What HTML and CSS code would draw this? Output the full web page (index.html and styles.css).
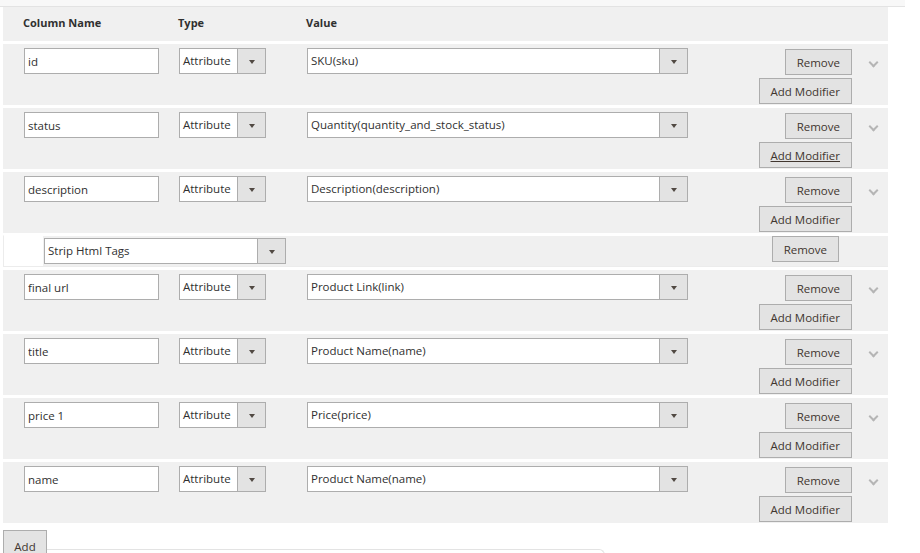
FILE: index.html
```html
<!DOCTYPE html>
<html lang="en">
<head>
<meta charset="UTF-8">
<meta name="viewport" content="width=device-width, initial-scale=1.0">
<title>Feed Columns</title>
<link rel="stylesheet" href="styles.css">
</head>
<body>
<div class="top-band"></div>
<div class="columns">
  <div class="head-row">
    <div>Column Name</div>
    <div>Type</div>
    <div>Value</div>
  </div>

  <div class="row">
    <input class="text-input" value="id">
    <div class="select type-select"><span class="select-text">Attribute</span><span class="select-arrow"></span></div>
    <div class="select"><span class="select-text">SKU(sku)</span><span class="select-arrow"></span></div>
    <div></div>
    <div class="actions"><button class="btn">Remove</button><button class="btn">Add Modifier</button></div>
    <div class="toggle"><span class="chevron"></span></div>
  </div>

  <div class="row">
    <input class="text-input" value="status">
    <div class="select type-select"><span class="select-text">Attribute</span><span class="select-arrow"></span></div>
    <div class="select"><span class="select-text">Quantity(quantity_and_stock_status)</span><span class="select-arrow"></span></div>
    <div></div>
    <div class="actions"><button class="btn">Remove</button><button class="btn btn-hover">Add Modifier</button></div>
    <div class="toggle"><span class="chevron"></span></div>
  </div>

  <div class="row">
    <input class="text-input" value="description">
    <div class="select type-select"><span class="select-text">Attribute</span><span class="select-arrow"></span></div>
    <div class="select"><span class="select-text">Description(description)</span><span class="select-arrow"></span></div>
    <div></div>
    <div class="actions"><button class="btn">Remove</button><button class="btn">Add Modifier</button></div>
    <div class="toggle"><span class="chevron"></span></div>
  </div>

  <div class="mod-row">
    <div class="mod-body">
      <div class="select mod-select"><span class="select-text">Strip Html Tags</span><span class="select-arrow"></span></div>
      <button class="btn">Remove</button>
    </div>
  </div>

  <div class="row">
    <input class="text-input" value="final url">
    <div class="select type-select"><span class="select-text">Attribute</span><span class="select-arrow"></span></div>
    <div class="select"><span class="select-text">Product Link(link)</span><span class="select-arrow"></span></div>
    <div></div>
    <div class="actions"><button class="btn">Remove</button><button class="btn">Add Modifier</button></div>
    <div class="toggle"><span class="chevron"></span></div>
  </div>

  <div class="row">
    <input class="text-input" value="title">
    <div class="select type-select"><span class="select-text">Attribute</span><span class="select-arrow"></span></div>
    <div class="select"><span class="select-text">Product Name(name)</span><span class="select-arrow"></span></div>
    <div></div>
    <div class="actions"><button class="btn">Remove</button><button class="btn">Add Modifier</button></div>
    <div class="toggle"><span class="chevron"></span></div>
  </div>

  <div class="row">
    <input class="text-input" value="price 1">
    <div class="select type-select"><span class="select-text">Attribute</span><span class="select-arrow"></span></div>
    <div class="select"><span class="select-text">Price(price)</span><span class="select-arrow"></span></div>
    <div></div>
    <div class="actions"><button class="btn">Remove</button><button class="btn">Add Modifier</button></div>
    <div class="toggle"><span class="chevron"></span></div>
  </div>

  <div class="row">
    <input class="text-input" value="name">
    <div class="select type-select"><span class="select-text">Attribute</span><span class="select-arrow"></span></div>
    <div class="select"><span class="select-text">Product Name(name)</span><span class="select-arrow"></span></div>
    <div></div>
    <div class="actions"><button class="btn">Remove</button><button class="btn">Add Modifier</button></div>
    <div class="toggle"><span class="chevron"></span></div>
  </div>
</div>

<div class="footer">
  <button class="btn btn-add">Add</button>
  <div class="next-box"></div>
</div>
</body>
</html>
```

FILE: styles.css
```css
html, body {
  margin: 0;
  padding: 0;
  background: #fff;
  font-family: "Open Sans", "Noto Sans", sans-serif;
  font-size: 11.5px;
  color: #303030;
  overflow: hidden;
}
.top-band {
  width: 905px;
  height: 6px;
  background: #f8f8f8;
  border-bottom: 1px solid #e3e3e3;
}
.columns {
  margin-left: 3px;
  width: 885px;
}
.head-row,
.row {
  display: grid;
  grid-template-columns: 155px 128px 381px 1fr auto 36px;
  background: #f0f0f0;
  box-sizing: border-box;
}
.head-row {
  height: 34px;
  padding: 0 0 3px 20px;
  align-items: center;
  font-size: 11px;
  font-weight: 700;
  color: #303030;
  margin-bottom: 3px;
}
.row {
  height: 61px;
  padding: 4px 0 1px 21px;
  margin-bottom: 3px;
  align-items: start;
}
.text-input {
  width: 135px;
  height: 26px;
  box-sizing: border-box;
  border: 1px solid #adadad;
  padding: 0 3px;
  margin: 0;
  font: inherit;
  color: #303030;
  background: #fff;
  outline: none;
}
.select {
  display: flex;
  height: 26px;
  box-sizing: border-box;
  border: 1px solid #adadad;
  background: #fff;
}
.type-select {
  width: 87px;
}
.select-text {
  flex: 1;
  padding-left: 3px;
  line-height: 24px;
  white-space: nowrap;
  overflow: hidden;
}
.select-arrow {
  width: 27px;
  background: #e3e3e3;
  border-left: 1px solid #adadad;
  display: flex;
  align-items: center;
  justify-content: center;
}
.select-arrow::after {
  content: "";
  border-top: 4px solid #514943;
  border-left: 3px solid transparent;
  border-right: 3px solid transparent;
  margin-top: 1px;
}
.actions {
  display: flex;
  flex-direction: column;
  align-items: flex-end;
  gap: 3px;
  padding-top: 1px;
}
.btn {
  height: 26px;
  box-sizing: border-box;
  border: 1px solid #adadad;
  background: #e3e3e3;
  color: #41362f;
  font-family: inherit;
  font-size: 11.5px;
  font-weight: 400;
  padding: 0 11px;
  margin: 0;
  cursor: pointer;
}
.btn-hover {
  text-decoration: underline;
}
.toggle {
  display: flex;
  justify-content: center;
  padding-top: 11px;
}
.chevron {
  width: 5px;
  height: 5px;
  border-right: 2px solid #b5b5b5;
  border-bottom: 2px solid #b5b5b5;
  transform: rotate(45deg);
  margin-left: 6px;
}
.mod-row {
  display: flex;
  height: 32px;
  box-sizing: border-box;
  margin-top: -1px;
  margin-bottom: 3px;
  padding-left: 39px;
  border: 1px solid #ececec;
  border-right: 0;
  border-top-color: #fff;
  background: #fff;
}
.mod-body {
  flex: 1;
  display: flex;
  justify-content: space-between;
  align-items: flex-start;
  background: #f0f0f0;
  padding: 0 49px 0 1px;
}
.mod-select {
  width: 242px;
  margin-top: 2px;
}
.footer {
  display: flex;
  align-items: flex-start;
  margin-left: 3px;
  margin-top: 7px;
}
.btn-add {
  width: 44px;
  height: 30px;
  padding: 0;
  padding-top: 2px;
}
.next-box {
  width: 557px;
  height: 10px;
  margin-top: 19px;
  border-top: 1px solid #e3e3e3;
  border-right: 1px solid #e3e3e3;
  border-top-right-radius: 6px;
}
```
